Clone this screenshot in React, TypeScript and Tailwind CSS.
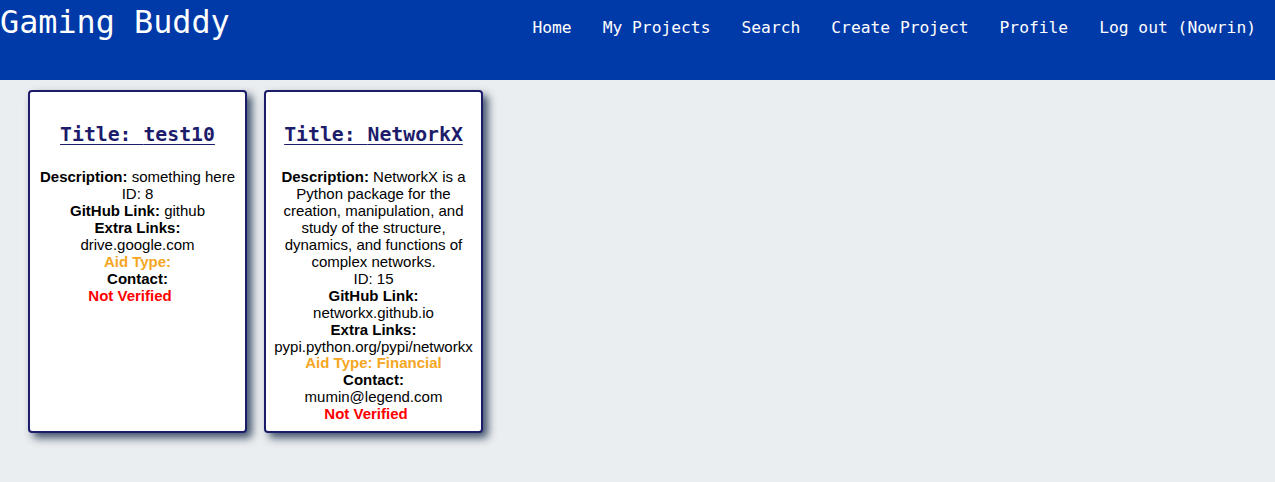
const navLinks = ['Home', 'My Projects', 'Search', 'Create Project', 'Profile', 'Log out (Nowrin)'];

type Project = {
  title: string;
  description: string;
  id: number;
  github: string;
  extra: string;
  aid: string;
  contact: string;
};

const projects: Project[] = [
  {
    title: 'test10',
    description: 'something here',
    id: 8,
    github: 'github',
    extra: 'drive.google.com',
    aid: '',
    contact: '',
  },
  {
    title: 'NetworkX',
    description:
      'NetworkX is a Python package for the creation, manipulation, and study of the structure, dynamics, and functions of complex networks.',
    id: 15,
    github: 'networkx.github.io',
    extra: 'pypi.python.org/pypi/networkx',
    aid: 'Financial',
    contact: 'mumin@legend.com',
  },
];

function ProjectCard({ p }: { p: Project }) {
  return (
    <div className="w-[219px] rounded-[4px] border-2 border-[#1c1c6b] bg-white px-[8px] pt-[31px] pb-[8px] text-center shadow-[5px_5px_9px_rgba(35,55,85,0.85)]">
      <h2 className="mb-[22px] font-['DejaVu_Sans_Mono',monospace] text-[19.8px] font-bold leading-6 text-[#1c1c6b] underline underline-offset-[3px]">
        Title: {p.title}
      </h2>
      <div className="font-['Liberation_Sans',Arial,sans-serif] text-[15px] leading-[16.95px] text-black">
        <p>
          <b>Description:</b> {p.description}
        </p>
        <p>ID: {p.id}</p>
        <p>
          <b>GitHub Link:</b> {p.github}
        </p>
        <p>
          <b>Extra Links:</b> {p.extra}
        </p>
        <p className="font-bold text-[#f5a623]">Aid Type: {p.aid}</p>
        <p>
          <b>Contact:</b> {p.contact}
        </p>
        <p className="pr-[15px] font-bold text-[#ff0000]">Not Verified</p>
      </div>
    </div>
  );
}

export default function App() {
  return (
    <div className="min-h-[482px] bg-[#ebeef0]">
      <header className="flex h-[80px] items-start justify-between bg-[#0039a8] text-white">
        <h1 className="font-['DejaVu_Sans_Mono',monospace] text-[31.8px] leading-[44px]">Gaming Buddy</h1>
        <nav className="flex gap-[31px] pt-[18px] pr-[19px] font-['DejaVu_Sans_Mono',monospace] text-[16.3px] leading-5">
          {navLinks.map((l) => (
            <a key={l} href="#" className="whitespace-nowrap">
              {l}
            </a>
          ))}
        </nav>
      </header>
      <main className="flex items-stretch gap-[17px] pt-[10px] pl-[28px]">
        {projects.map((p) => (
          <ProjectCard key={p.id} p={p} />
        ))}
      </main>
    </div>
  );
}
